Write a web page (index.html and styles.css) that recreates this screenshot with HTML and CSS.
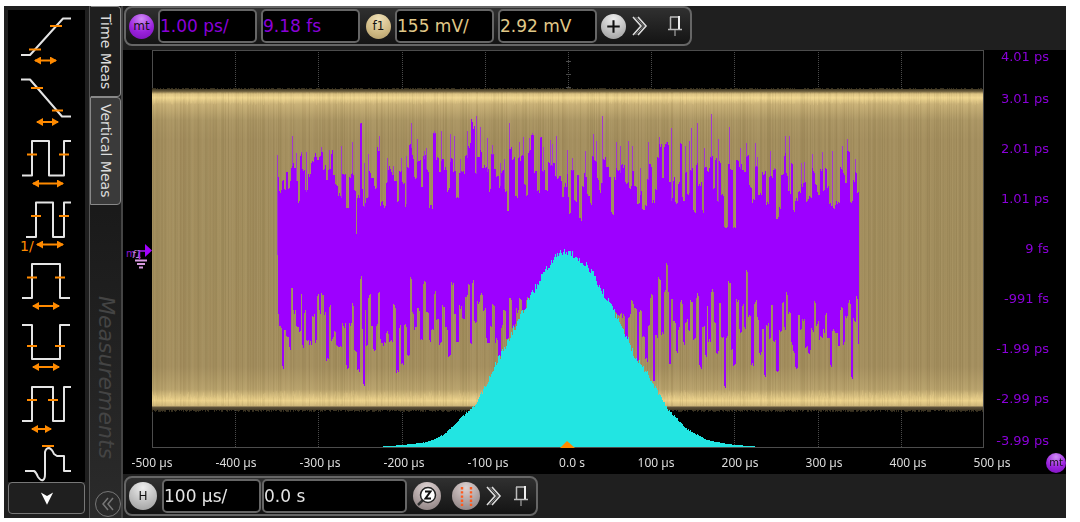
FILE: index.html
```html
<!DOCTYPE html>
<html lang="en">
<head>
<meta charset="utf-8">
<title>Jitter measurement</title>
<link rel="stylesheet" href="styles.css">
</head>
<body>
<svg class="defs" aria-hidden="true">
  <defs>
    <marker id="head" viewBox="0 0 7 8" refX="6" refY="4" markerWidth="7" markerHeight="8" markerUnits="userSpaceOnUse" orient="auto-start-reverse"><path d="M0 0L7 4L0 8Z" fill="#ff8a00"/></marker>
    <symbol id="more" viewBox="0 0 16 20"><path d="M1 1L9 10L1 19M6 1L14 10L6 19" fill="none" stroke="#ddd" stroke-width="1.6"/><path d="M3.500 1L11.500 10L3.500 19" fill="none" stroke="#777" stroke-width="1"/></symbol>
    <symbol id="pin" viewBox="0 0 14 20"><path d="M2.500 1V13M2 1H11M0 13.500H14" fill="none" stroke="#bbb" stroke-width="1.500"/><path d="M11 0V13" stroke="#eee" stroke-width="2"/><path d="M7 14V20" stroke="#888" stroke-width="1.500"/></symbol>
  </defs>
</svg>
<main class="scope">
  <nav class="tools" aria-label="Measurements">
    <div class="tool-list">
      <button class="tool" aria-label="Rise time"><svg viewBox="0 0 77 61"><path class="wave" d="M13 45H22L55 8.500H63"/><path class="mark" d="M21 39.500H33M42 16H54"/><path class="span" d="M27 50.500H48"/></svg></button>
      <button class="tool" aria-label="Fall time"><svg viewBox="0 0 77 61"><path class="wave" d="M13 8.500H22L54 45.500H63"/><path class="mark" d="M23 17H35M44 39.500H55"/><path class="span" d="M29 51H50"/></svg></button>
      <button class="tool" aria-label="Period"><svg viewBox="0 0 77 61"><path class="wave" d="M14 43.500H24V9H41V43.500H56V9H63"/><path class="mark" d="M19 22.500H29M51 22.500H61"/><path class="span" d="M25 51.500H55"/></svg></button>
      <button class="tool" aria-label="Frequency"><svg viewBox="0 0 77 61"><path class="wave" d="M18 44H28V9.500H45V44H56V9.500H63"/><path class="mark" d="M23 23H33M51 23H61"/><path class="span" d="M29 51.500H55"/><text x="12" y="58">1/</text></svg></button>
      <button class="tool" aria-label="Positive width"><svg viewBox="0 0 77 61"><path class="wave" d="M14 44H24V10H52V44H62"/><path class="mark" d="M19 23.500H29M47 23.500H57"/><path class="span" d="M25 52H51"/></svg></button>
      <button class="tool" aria-label="Negative width"><svg viewBox="0 0 77 61"><path class="wave" d="M14 10H24V44H52V10H62"/><path class="mark" d="M19 31H29M47 31H57"/><path class="span" d="M25 52H51"/></svg></button>
      <button class="tool" aria-label="Duty cycle"><svg viewBox="0 0 77 61"><path class="wave" d="M14 45H24V11H45V45H56V11H63"/><path class="mark" d="M19 24H29M40 24H50"/><path class="span" d="M24 53H43"/></svg></button>
      <button class="tool short" aria-label="Time of maximum"><svg viewBox="0 0 77 45"><path class="wave" d="M17 34H26Q28 35 30 40Q33 44 35 43Q37 42 37 37V15Q38 11 41 11Q44 12 46 17L49 19H56V34H63"/><path class="mark" d="M34 9H46"/></svg></button>
    </div>
    <button class="scroll" aria-label="Scroll down"><svg viewBox="0 0 16 14"><path d="M1 0L8 4L15 0L8 14Z" fill="#fff"/></svg></button>
  </nav>
  <div class="tabs">
    <button class="tab selected">Time Meas</button>
    <button class="tab">Vertical Meas</button>
    <span class="title">Measurements</span>
    <button class="collapse" aria-label="Collapse"><svg viewBox="0 0 12 14"><path d="M6 1L1 7L6 13M11 1L6 7L11 13" fill="none" stroke="#777" stroke-width="1.500"/></svg></button>
  </div>
  <section class="display">
    <div class="bar">
      <div class="group">
        <button class="badge violet">mt</button>
        <input class="field violet-text" aria-label="Trend scale" value="1.00 ps/">
        <input class="field violet-text" aria-label="Trend offset" value="9.18 fs">
        <button class="badge sand">f1</button>
        <input class="field sand-text" aria-label="Function scale" value="155 mV/">
        <input class="field sand-text" aria-label="Function offset" value="2.92 mV">
        <button class="badge grey add" aria-label="Add"><svg viewBox="0 0 24 24"><path d="M12 6V18M6 12H18" stroke="#111" stroke-width="2"/></svg></button>
        <button class="plain" aria-label="More"><svg class="more"><use href="#more"/></svg></button>
        <button class="plain pin-button" aria-label="Pin"><svg class="pin"><use href="#pin"/></svg></button>
      </div>
    </div>
    <div class="graph">
      <div class="ground">
        <svg viewBox="0 0 27 24" role="img" aria-label="Channel reference level">
          <text x="1" y="11" class="ref-m">m</text><text x="7" y="12" class="ref-f">f1</text>
          <path d="M14.500 13V5H20" fill="none" stroke="#a020f0" stroke-width="1.500"/><path d="M20 -2L27 4.500L20 11Z" fill="#a200ff"/>
          <path d="M10 14.500H22M12 18H20M14 21.500H18" stroke="#d79be0" stroke-width="1.800"/>
        </svg>
      </div>
      <canvas id="plot" class="plot" width="832" height="398" role="img" aria-label="Jitter trend and histogram over the waveform"></canvas>
      <div class="y-axis">
        <span>4.01 ps</span><span>3.01 ps</span><span>2.01 ps</span><span>1.01 ps</span><span>9 fs</span><span>-991 fs</span><span>-1.99 ps</span><span>-2.99 ps</span><span>-3.99 ps</span>
      </div>
    </div>
    <div class="x-row">
      <div class="x-axis">
        <span>-500 µs</span><span>-400 µs</span><span>-300 µs</span><span>-200 µs</span><span>-100 µs</span><span>0.0 s</span><span>100 µs</span><span>200 µs</span><span>300 µs</span><span>400 µs</span><span>500 µs</span>
      </div>
      <button class="badge violet small">mt</button>
    </div>
    <div class="bar bottom">
      <div class="group">
        <button class="badge grey large">H</button>
        <input class="field white-text" aria-label="Time per division" value="100 µs/">
        <input class="field wide white-text" aria-label="Horizontal position" value="0.0 s">
        <button class="badge large rose zoom" aria-label="Zoom"><svg viewBox="0 0 28 28"><path d="M10 18L5 23" stroke="#333" stroke-width="2.500"/><circle cx="15" cy="13" r="7.500" fill="#fff" stroke="#222" stroke-width="1.500"/><path d="M12 9.500H17.500L12.500 16.500H18" fill="none" stroke="#111" stroke-width="2"/></svg></button>
        <button class="badge large rose" aria-label="Cursors"><svg viewBox="0 0 28 28"><path d="M10 5V24M19 5V24" stroke="#ff5a1f" stroke-width="2.400" stroke-dasharray="2.400 1.800"/></svg></button>
        <button class="plain" aria-label="More"><svg class="more"><use href="#more"/></svg></button>
        <button class="plain pin-button near" aria-label="Pin"><svg class="pin"><use href="#pin"/></svg></button>
      </div>
    </div>
  </section>
</main>
<script src="plot.js"></script>
</body>
</html>
```

FILE: styles.css
```css
* { box-sizing: border-box; }

body {
  margin: 0;
  padding: 6px 14px 4px 4px;
  background: #fff;
  font-family: "DejaVu Sans", Verdana, sans-serif;
}

button {
  margin: 0;
  padding: 0;
  border: 0;
  background: none;
  color: inherit;
  font: inherit;
}

svg { display: block; overflow: visible; }

.defs { position: absolute; width: 0; height: 0; }

.scope {
  display: flex;
  background: #000;
}

.tools {
  display: flex;
  flex-direction: column;
  flex: none;
  width: 85px;
  padding: 4px;
  background: #1f1f1f;
}

.tool-list {
  flex: 1;
  background: #000;
}

.tool { display: block; width: 77px; height: 61px; }
.tool.short { height: 45px; }
.wave { fill: none; stroke: #e4e4e4; stroke-width: 2; stroke-linejoin: round; }
.mark { fill: none; stroke: #ff8a00; stroke-width: 2; }
.span { fill: none; stroke: #ff8a00; stroke-width: 2; marker-start: url(#head); marker-end: url(#head); }
.tool text { fill: #ff8a00; font-size: 14px; }

.scroll {
  display: flex;
  align-items: center;
  justify-content: center;
  height: 32px;
  border: 1px solid #777;
  border-radius: 4px;
  background: #1f1f1f;
}

.scroll svg { width: 14px; height: 13px; }

.tabs {
  display: flex;
  flex-direction: column;
  align-items: center;
  flex: none;
  width: 34px;
  border-left: 1px solid #555;
  border-right: 2px solid #444;
  background: linear-gradient(#1a1a1a 40%, #2b2b2b);
}

.tab {
  width: 100%;
  padding: 6px 0;
  border: 1px solid #888;
  border-radius: 0 4px 4px 0;
  background: #3a3a3a;
  color: #ddd;
  font-size: 14px;
  line-height: 28px;
  writing-mode: vertical-rl;
}

.tab.selected { border-left-color: #1f1f1f; background: #1f1f1f; padding: 7px 0; }

.title {
  margin-top: auto;
  color: #444;
  font-size: 22px;
  font-style: italic;
  line-height: 30px;
  writing-mode: vertical-rl;
}

.collapse {
  display: flex;
  align-items: center;
  justify-content: center;
  width: 26px;
  height: 26px;
  margin: 32px 0 1px 4px;
  border: 1px solid #777;
  border-radius: 50%;
}

.collapse svg { width: 12px; height: 14px; }

.display { flex: 1; min-width: 0; }

.bar {
  height: 44px;
  padding-left: 1px;
  background: #1f1f1f;
}

.bar.bottom { padding-top: 2px; }

.group {
  display: inline-flex;
  align-items: center;
  height: 40px;
  padding: 0 8px 0 3px;
  border: 2px solid #666;
  border-radius: 8px;
  background: linear-gradient(#303030, #141414);
}

.badge {
  display: flex;
  align-items: center;
  justify-content: center;
  flex: none;
  width: 25px;
  height: 25px;
  border-radius: 50%;
  color: #111;
  font-size: 12px;
}

.badge.large { width: 28px; height: 28px; }
.badge.small { width: 20px; height: 20px; font-size: 10px; }
.badge svg { width: 100%; height: 100%; }
.violet { background: radial-gradient(circle at 50% 20%, #cf8cf5, #9a22dd 55%, #7a10b8); }
.sand { background: radial-gradient(circle at 50% 20%, #efe0b8, #cfb983 60%, #b09a68); }
.grey { background: radial-gradient(circle at 50% 20%, #eee, #bbb 60%, #999); }
.rose { background: radial-gradient(circle at 50% 20%, #ddd2d2, #aa9d9d 60%, #857a7a); }

.field {
  width: 99px;
  height: 34px;
  margin: 0 4px 0 0;
  padding: 0;
  border: 2px solid #666;
  border-radius: 5px;
  background: #000;
  font-family: "DejaVu Sans", Verdana, sans-serif;
  font-size: 17px;
}

.badge + .field { margin-left: 4px; }
.field + .badge { margin-left: 2px; }
.field + .add { margin-left: 0; }
.field.wide { width: 145px; }
.bottom .field { margin-right: 1px; }
.bottom .field + .badge { margin-left: 5px; }
.bottom .badge + .field { margin-left: 5px; }
.bottom .zoom { margin-right: 11px; }
.violet-text { color: #8a00d8; }
.sand-text { color: #e0c888; }
.white-text { color: #e4e4e4; }

.plain { margin-left: 6px; }
.pin-button { margin-left: 20px; }
.pin-button.near { margin-left: 12px; }
.more { width: 16px; height: 20px; }
.pin { width: 14px; height: 20px; }

.graph { display: flex; }

.ground {
  display: flex;
  align-items: center;
  justify-content: flex-end;
  flex: none;
  width: 29px;
  padding-top: 18px;
}

.ground svg { width: 27px; height: 24px; }
.ref-m { fill: #8a14d8; font-size: 10px; }
.ref-f { fill: #c090d0; font-size: 10px; font-style: italic; }

.plot {
  display: block;
  flex: 1;
  min-width: 0;
  aspect-ratio: 832 / 398;
}

.y-axis {
  display: grid;
  grid-template-rows: 24fr repeat(7, 50fr) 24fr;
  align-items: center;
  flex: none;
  width: 82px;
  padding-right: 17px;
  color: #8a00d8;
  font-size: 13px;
  line-height: 14px;
  text-align: right;
}

.y-axis span:first-child { align-self: start; }
.y-axis span:last-child { align-self: end; }

.x-row {
  display: flex;
  align-items: center;
  gap: 33px;
  height: 26px;
  padding: 3px 0 0 8px;
}

.x-axis {
  display: grid;
  grid-template-columns: repeat(11, 42px);
  justify-content: space-between;
  flex: 1;
  color: #ddd;
  font-family: "Noto Sans", "Open Sans", sans-serif;
  font-size: 12px;
  text-align: center;
  white-space: nowrap;
}
```

FILE: plot.js
```js
const canvas = document.getElementById("plot");
const ctx = canvas.getContext("2d");
const W = canvas.width, H = canvas.height;

let seed = 7;
function rnd() {
  seed = (seed * 1664525 + 1013904223) % 4294967296;
  return seed / 4294967296;
}

// Graticule
function grid() {
  ctx.fillStyle = "#000";
  ctx.fillRect(0, 0, W, H);
  ctx.fillStyle = "#4a4a4a";
  for (let i = 1; i < 10; i++) {
    const x = Math.round(i * W / 10);
    for (let y = 0; y < H; y += 2) ctx.fillRect(x, y, 1, 1);
  }
  for (let y = 11; y < H; y += 13) ctx.fillRect(W / 2 - 2, y, 5, 1);
}

// Persistence band of the source waveform
function band() {
  const g = ctx.createLinearGradient(0, 38, 0, 362);
  [[0, "#2c2618"], [.01, "#6b5d3c"], [.018, "#d8bf80"], [.03, "#f0d792"], [.05, "#c9b177"],
   [.1, "#ab9664"], [.16, "#a48f5f"], [.5, "#a28e5e"], [.86, "#a48f5f"], [.93, "#b8a26c"],
   [.965, "#ecd28c"], [.98, "#d0b87b"], [.986, "#5c5038"], [1, "#2c2618"]
  ].forEach(s => g.addColorStop(s[0], s[1]));
  for (let x = 0; x < W; x++) {
    const top = 38 + Math.floor(rnd() * 2), end = 360 + Math.floor(rnd() * 3);
    ctx.fillStyle = g;
    ctx.fillRect(x, top, 1, end - top);
    const shade = rnd();
    ctx.fillStyle = shade > .5 ? "rgba(255,235,180," + (shade - .5) * .1 + ")" : "rgba(60,40,0," + (.5 - shade) * .16 + ")";
    ctx.fillRect(x, 42, 1, 314);
    ctx.fillStyle = "rgba(255,228,155," + rnd() * .2 + ")";
    ctx.fillRect(x, 44, 1, 3 + rnd() * 8);
    ctx.fillRect(x, 350 - rnd() * 10, 1, 5);
  }
}

// Samples are "x:y" pairs in thirds of a pixel from the given origin
function parse(text, ox, oy) {
  return text.trim().split(/\s+/).map(p => {
    const v = p.split(":").map(Number);
    return [ox + v[0] / 3, oy + v[1] / 3];
  });
}

const upper = parse(`53:265 60:305 67:265 72:300 78:250 84:298 90:270 95:225 104:235 110:265 116:335 121:190 130:240 138:300 145:255 155:220 163:195 172:205 178:200 185:180 192:230 198:265 208:235 215:185 220:250 227:285 238:315 248:250 254:258 261:358 268:262 276:250 282:295 288:430 293:320 301:100 306:295 310:343 320:325 328:248 337:268 345:290 353:175 362:340 373:345 378:280 388:235 397:250 405:275 413:330 420:240 429:280 435:345 442:235 450:165 457:200 465:260 475:215 485:295 492:200 500:240 512:350 522:125 530:205 538:250 546:205 555:235 564:300 572:210 582:240 593:325 600:245 610:250 618:195 628:165 634:92 640:110 645:248 653:205 661:180 670:230 680:238 688:300 695:185 703:240 710:260 720:285 725:240 735:300 741:355 748:175 758:205 768:320 775:205 787:200 793:275 800:320 807:180 818:130 825:240 833:300 841:140 850:240 858:300 866:220 878:225 888:260 900:265 908:320 916:285 925:325`, 108, 40)
.concat(parse(`0:270 7:320 15:285 22:250 28:370 36:243 47:330 53:250 60:383 68:290 75:255 82:315 92:335 97:200 105:212 113:265 119:300 125:275 130:205 140:228 148:262 156:372 162:262 168:240 175:240 187:225 198:275 210:290 217:240 225:285 234:335 241:310 248:360 255:350 262:262 270:225 280:335 286:298 293:200 299:167 307:268 315:165 323:158 328:275 333:330 340:265 347:335 355:280 360:163 368:325 377:242 383:310 392:240 403:362 409:218 418:280 428:365 434:235 443:238 452:200 460:290 465:200 472:335 477:215 486:310 497:415 505:215 513:240 522:415 528:205 540:228 550:245 560:195 570:285 580:330 587:225 600:308 611:250 621:338 632:262 642:240 650:385 658:355 667:250 675:195 680:250 687:305 695:220 699:362 708:325 715:305 725:285 733:270 741:330 750:320 757:240 767:275 775:310 783:238 790:305 797:240 803:290 810:345 822:350 833:340 842:235 850:250 858:280 863:183 873:335 881:270 888:250 893:305 897:360`, 408, 40));

const spikes = parse(`53:195 98:137 108:190 123:185 140:187 185:170 207:180 216:183 245:168 276:155 301:100 313:218 325:193 357:137 382:203 400:228 423:205 438:197 453:100 473:147 492:183 500:173 522:124 545:122 570:133 583:137 600:208 622:122 634:90 648:78 661:112 682:143 697:165 722:218 733:208 748:100 778:155 790:142 808:143 818:128 841:140 850:170 870:150 878:163 890:137 922:180`, 108, 40)
.concat(parse(`22:182 38:203 75:182 99:133 109:153 128:77 168:157 181:168 206:152 216:168 240:235 265:156 297:142 318:155 333:113 360:163 375:168 388:153 394:115 412:100 434:175 453:72 475:147 509:112 540:173 558:158 587:158 593:200 632:182 643:235 677:137 687:137 697:222 725:220 733:215 758:193 786:187 818:184 848:168 863:147 886:207`, 408, 40));

const lower = parse(`53:155 60:200 69:320 73:210 80:225 88:260 97:90 100:155 110:200 118:208 123:98 128:260 135:155 140:240 150:245 160:165 167:240 171:102 178:155 187:105 193:160 201:300 208:135 216:235 222:212 230:258 240:260 250:195 262:318 270:195 276:130 285:270 295:330 301:50 305:200 310:375 314:150 320:250 327:105 335:195 342:265 350:190 357:90 362:240 372:250 382:215 390:240 403:135 410:330 418:200 427:310 436:195 445:285 451:55 457:155 465:205 473:150 482:235 494:65 500:160 508:240 517:205 523:98 530:180 541:250 550:140 558:205 567:282 576:72 584:160 590:240 600:140 608:180 618:105 625:72 632:250 638:65 645:180 655:125 663:100 673:145 682:240 692:200 698:135 706:240 716:290 725:200 732:155 742:230 751:115 760:195 770:150 778:115 790:150 800:110`, 108, 210)
.concat(parse(`180:160 190:165 197:240 207:165 216:125 224:140 233:300 240:150 247:225 258:300 265:190 272:105 281:355 288:225 298:55 304:220 315:95 319:8 323:95 328:310 334:120 340:180 350:270 357:205 362:125 370:250 378:180 384:215 392:122 402:235 412:105 419:318 427:200 437:292 440:130 447:240 455:92 463:180 471:275 478:125 486:235 494:375 500:225 507:68 513:270 524:315 529:120 540:210 549:130 553:200 558:35 564:165 578:310 584:125 592:170 600:280 606:210 615:350 620:190 628:235 633:135 643:240 652:330 660:210 668:130 673:200 678:97 686:155 694:245 700:280 709:320 716:170 722:205 728:180 737:255 747:275 755:210 763:128 772:190 781:235 791:210 797:160 803:230 811:318 820:205 828:220 837:260 842:140 850:250 858:165 868:125 874:355 881:180 889:110 893:245 897:230`, 408, 210));

function nearest(points, x) {
  let best = points[0];
  for (const p of points) if (Math.abs(p[0] - x) < Math.abs(best[0] - x)) best = p;
  return best[1];
}

function trend() {
  for (const [x, y] of spikes) {
    ctx.fillStyle = "#a338d0";
    ctx.fillRect(Math.floor(x), Math.round(y), 1, 205 - Math.round(y));
  }
  ctx.fillStyle = "#9d00ff";
  for (let x = 126; x < 707; x++) {
    const top = Math.round(nearest(upper, x) + rnd() * 5 - 2);
    const end = Math.round(nearest(lower, x) + rnd() * 5 - 2);
    ctx.fillRect(x, top, 1, end - top);
  }
}

const shape = [[223, 397], [251, 395], [275, 392], [291, 385], [305, 372], [315, 362], [321, 357],
  [330, 343], [338, 325], [347, 308], [356, 290], [365, 272], [375, 253], [383, 238], [391, 222],
  [401, 210], [408, 203], [413, 200], [416, 202], [423, 205], [430, 211], [440, 222], [450, 241],
  [461, 260], [471, 278], [483, 307], [496, 325], [508, 347], [518, 362], [536, 380], [555, 390],
  [575, 394], [608, 397]];

function histogram() {
  ctx.fillStyle = "#22e5e2";
  for (let i = 1; i < shape.length; i++) {
    const [x0, y0] = shape[i - 1], [x1, y1] = shape[i];
    for (let x = x0; x < x1; x++) {
      const y = y0 + (y1 - y0) * (x - x0) / (x1 - x0);
      const jitter = (rnd() - .5) * Math.min(8, (H - y) / 12);
      const top = Math.round(y + jitter);
      ctx.fillRect(x, top, 1, H - top);
    }
  }
}

grid();
band();
trend();
histogram();
ctx.fillStyle = "#4c4c4c";
ctx.fillRect(0, 0, W, 1);
ctx.fillRect(0, H - 1, W, 1);
ctx.fillRect(0, 0, 1, 38);
ctx.fillRect(0, 362, 1, H - 362);
ctx.fillRect(W - 1, 0, 1, H);
ctx.fillStyle = "#ff8a00";
ctx.beginPath();
ctx.moveTo(408, H);
ctx.lineTo(415, H - 7);
ctx.lineTo(423, H);
ctx.fill();
```
